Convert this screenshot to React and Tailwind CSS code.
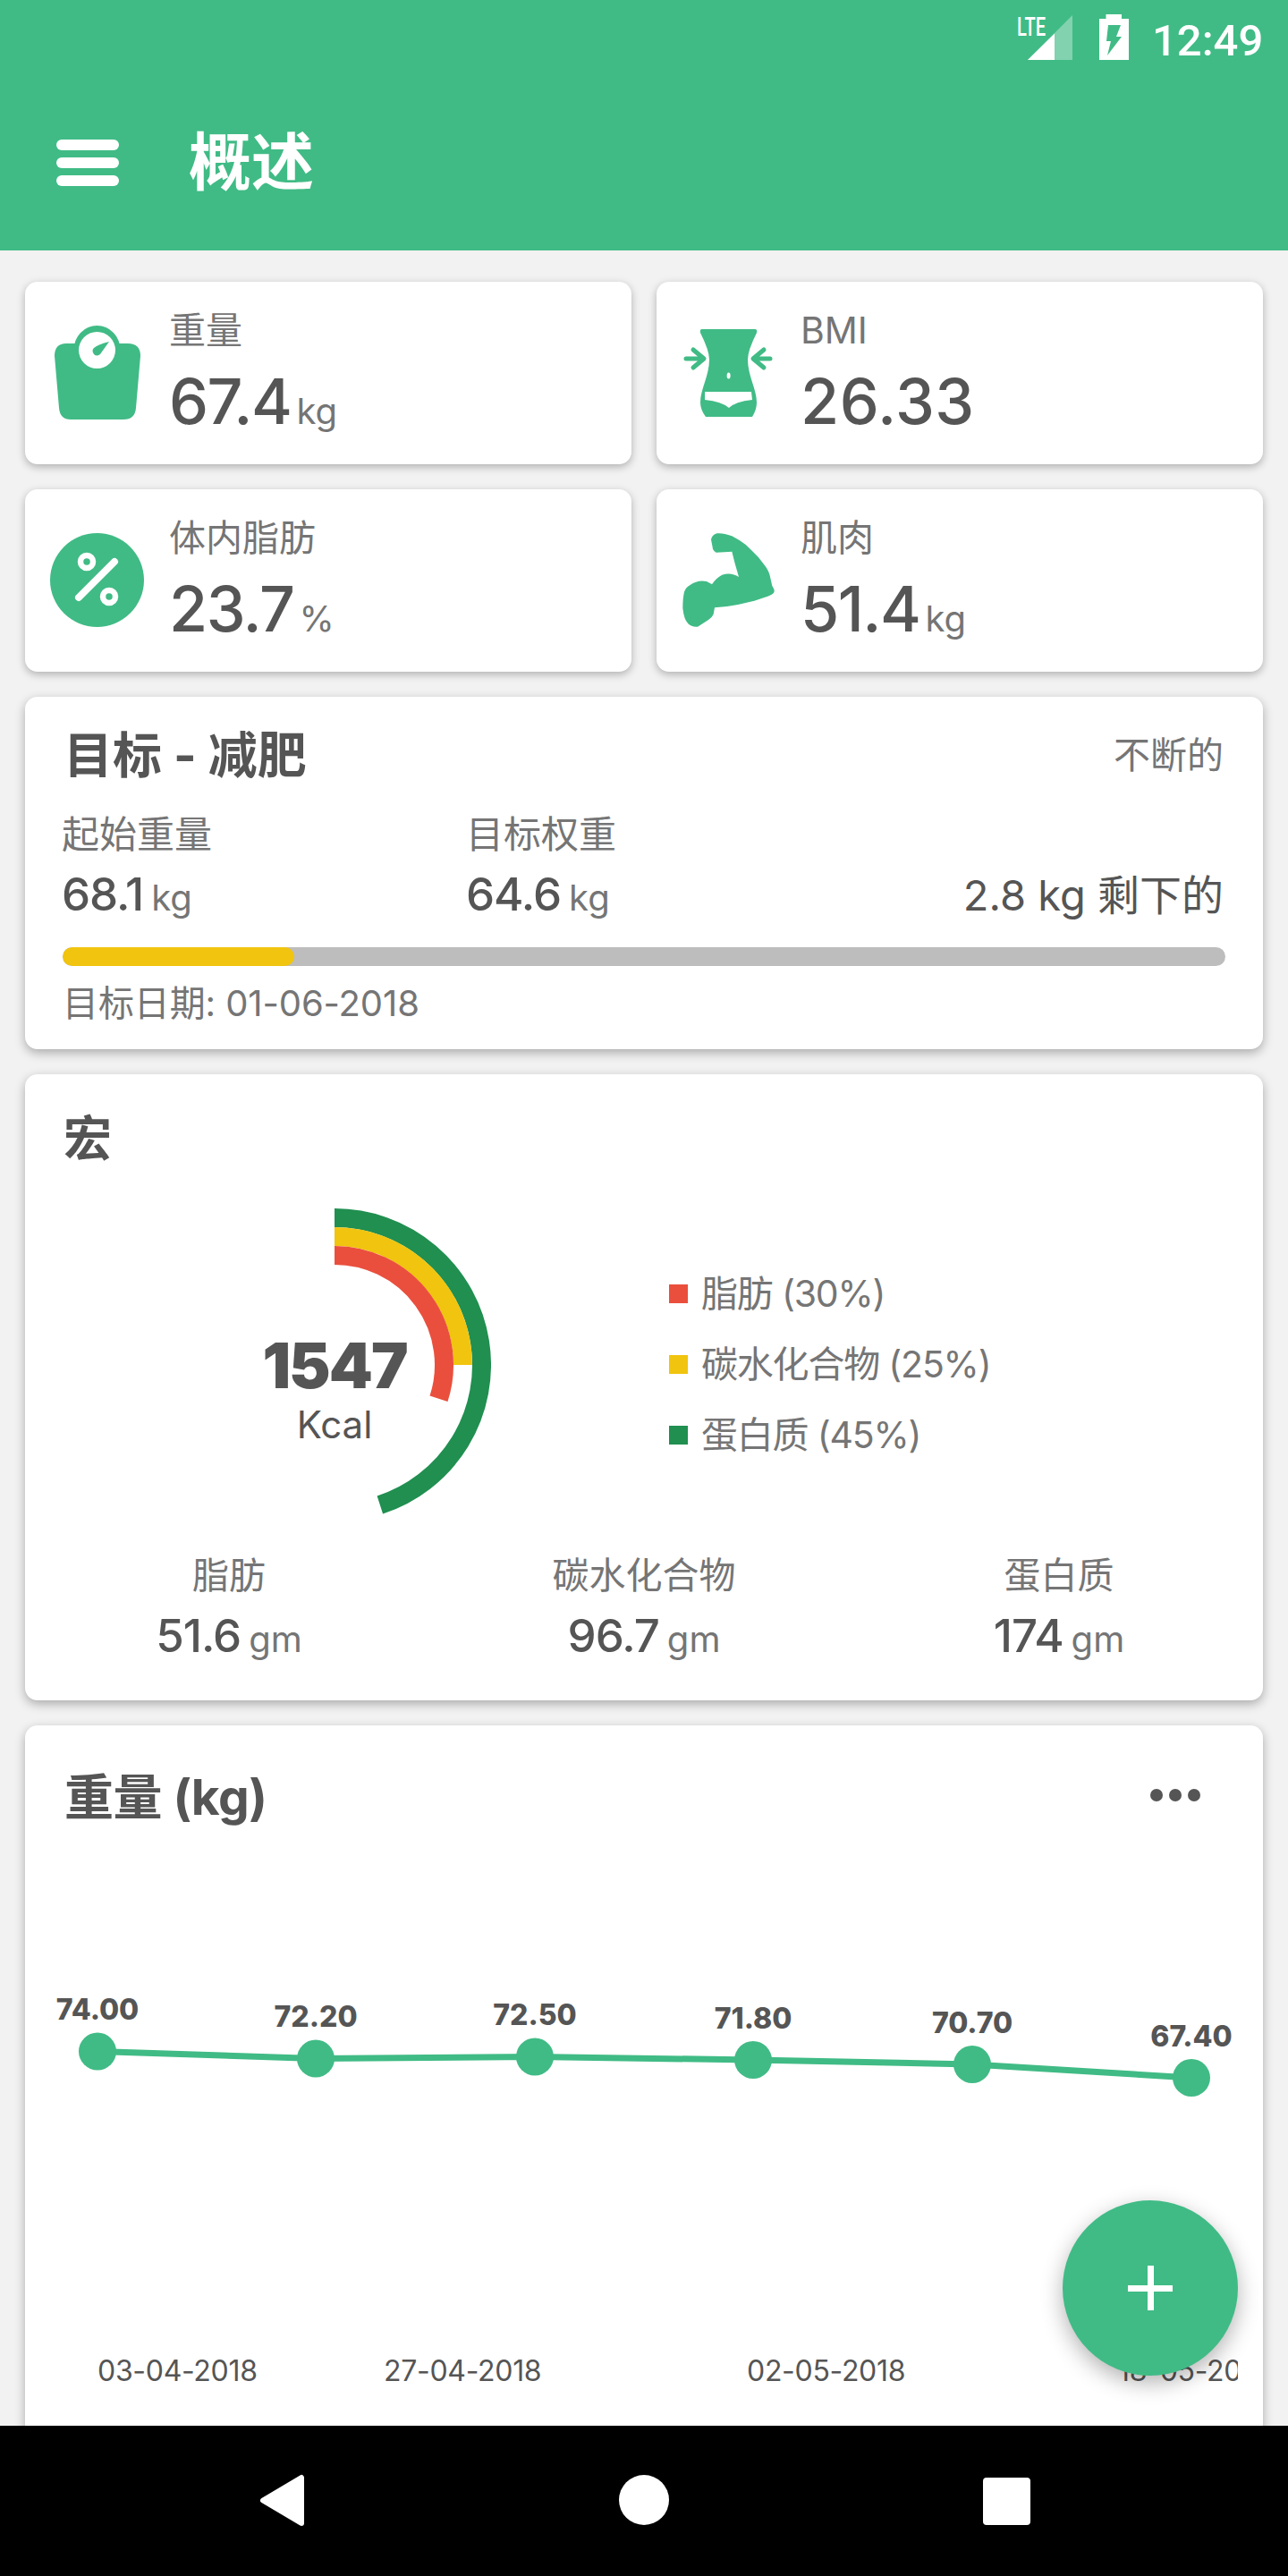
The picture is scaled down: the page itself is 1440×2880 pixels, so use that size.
import React from 'react';

const GREEN = '#40bb85';

// polar arc helper for the macro rings, angle is clockwise from 12 o'clock
const arc = (cx, cy, r, deg) => {
    const rad = (deg * Math.PI) / 180;
    const x = cx + r * Math.sin(rad);
    const y = cy - r * Math.cos(rad);
    return `M${cx} ${cy - r} A${r} ${r} 0 ${deg > 180 ? 1 : 0} 1 ${x} ${y}`;
};

const ScaleIcon = () => (
    <svg viewBox="55 362 110 110" className="w-[110px] h-[110px] shrink-0">
        <ellipse cx="108.5" cy="391" rx="26" ry="27" fill={GREEN} />
        <path d="M74 384H143Q157 384 157 398L152 456Q151 469 138 469H79Q67 469 66 456L61 398Q61 384 74 384Z" fill={GREEN} />
        <ellipse cx="108.5" cy="391.5" rx="20.5" ry="20.5" fill="#fff" />
        <path d="M122 382L112 396Q108 399 105 396Q102 392 105 389Q110 385 122 382Z" fill={GREEN} />
    </svg>
);

const WaistIcon = () => (
    <svg viewBox="761 362 110 110" className="w-[110px] h-[110px] shrink-0">
        <path d="M785 368H844Q847 368 846 372Q836 392 836 402C836 420 846 435 846 450Q846 458 841 466H789Q783 458 783 450C783 435 793 420 793 402Q793 392 783 372Q782 368 785 368Z" fill={GREEN} />
        <path d="M788 438H840L841 447Q822 449 815 456Q807 449 788 447Z" fill="#fff" />
        <ellipse cx="814.6" cy="420" rx="2" ry="3.5" fill="#fff" />
        <g fill="none" stroke={GREEN} strokeWidth="5" strokeLinecap="round" strokeLinejoin="round">
            <path d="M767 401H785M775 391L787 401L775 411" />
            <path d="M861 401H844M854 391L842 401L854 411" />
        </g>
    </svg>
);

const PercentIcon = () => (
    <svg viewBox="55 594 110 110" className="w-[110px] h-[110px] shrink-0">
        <circle cx="108.5" cy="648.5" r="52.5" fill={GREEN} />
        <path d="M88 668L128 628" stroke="#fff" strokeWidth="8" strokeLinecap="round" />
        <circle cx="97" cy="628" r="7" fill="none" stroke="#fff" strokeWidth="6.5" />
        <circle cx="122" cy="667" r="7" fill="none" stroke="#fff" strokeWidth="6.5" />
    </svg>
);

const ArmIcon = () => (
    <svg viewBox="761 594 110 110" className="w-[110px] h-[110px] shrink-0">
        <path
            transform="translate(730 540) scale(0.3333)"
            d="M195 190Q198 174 215 169Q232 166 265 178L290 192Q312 205 330 225Q355 248 370 270Q388 292 392 310L400 345Q410 360 406 367Q400 376 385 380L340 395L285 408Q245 416 207 418L203 440Q198 452 185 460L150 482Q130 484 118 472Q104 458 100 420Q100 385 105 365Q110 350 125 342Q150 324 180 330L198 340Q212 318 232 308Q262 298 288 315L275 270L265 230Q240 232 212 233Q200 225 200 215Z"
            fill={GREEN}
        />
    </svg>
);

const StatCard = ({ icon, label, value, unit, wide }) => (
    <div className="h-[204px] bg-white rounded-[14px] shadow-[0_3px_10px_rgba(0,0,0,0.28)] flex items-start pl-[27px] pt-[47px] gap-[24px]">
        {icon}
        <div className="flex flex-col -mt-[17px]">
            <span className="text-[41px] leading-[48px] text-[#757575]">{label}</span>
            <div className="mt-[21px] flex items-baseline leading-[70px]">
                <span className={`text-[70px] font-medium text-[#555555] ${wide ? 'tracking-[0.5px]' : 'tracking-[-1.5px]'}`}>{value}</span>
                {unit && <span className="text-[40px] ml-[6px] text-[#757575]">{unit}</span>}
            </div>
        </div>
    </div>
);

const SmallValue = ({ value, unit, className = '' }) => (
    <div className={`flex items-baseline leading-[56px] ${className}`}>
        <span className="text-[51px] font-medium tracking-[-1px] text-[#555555]">{value}</span>
        <span className="text-[40px] ml-[9px] text-[#757575]">{unit}</span>
    </div>
);

const GoalCard = () => (
    <div className="h-[394px] shrink-0 bg-white rounded-[14px] shadow-[0_4px_12px_rgba(0,0,0,0.3)] px-[42px] pt-[30px] flex flex-col">
        <div className="flex justify-between items-center">
            <span className="text-[55px] leading-[70px] font-bold text-[#555555] ml-[1px]">目标 - 减肥</span>
            <span className="text-[41px] leading-[48px] text-[#757575] mr-[2px]">不断的</span>
        </div>
        <div className="flex items-end mt-[30px]">
            <div className="w-[452px] ml-[-1px]">
                <div className="text-[42px] leading-[48px] text-[#757575]">起始重量</div>
                <SmallValue value="68.1" unit="kg" className="mt-[15px]" />
            </div>
            <div className="flex-1">
                <div className="text-[42px] leading-[48px] text-[#757575]">目标权重</div>
                <SmallValue value="64.6" unit="kg" className="mt-[15px]" />
            </div>
            <div className="text-[47px] leading-[56px] text-[#555555] mr-[2px] mb-[3px]">2.8 kg 剩下的</div>
        </div>
        <div className="h-[21px] rounded-full bg-[#bdbdbd] mt-[27px] overflow-hidden">
            <div className="h-full w-[259px] rounded-full bg-[#f1c40f]" />
        </div>
        <div className="text-[40px] leading-[48px] text-[#757575] mt-[18px] tracking-[-0.1px]">目标日期: 01-06-2018</div>
    </div>
);

const LegendItem = ({ color, label }) => (
    <div className="flex items-center h-[79px] gap-[15px]">
        <span className={`w-[21px] h-[21px] ${color}`} />
        <span className="text-[41px] text-[#757575] tracking-[-1.2px]">{label}</span>
    </div>
);

const MacroStat = ({ label, value }) => (
    <div className="flex flex-col items-center">
        <span className="text-[41px] leading-[48px] text-[#757575]">{label}</span>
        <SmallValue value={value} unit="gm" className="mt-[16px]" />
    </div>
);

const MacroCard = () => (
    <div className="h-[700px] shrink-0 bg-white rounded-[14px] shadow-[0_4px_12px_rgba(0,0,0,0.3)] pt-[38px] flex flex-col">
        <div className="text-[54px] leading-[70px] font-bold text-[#555555] pl-[43px]">宏</div>
        <div className="flex items-start mt-[42px]">
            <div className="relative w-[350px] h-[350px] ml-[171px] shrink-0">
                <svg viewBox="0 0 350 350" className="w-full h-full" fill="none" strokeWidth="21">
                    <path d={arc(175, 175, 164.5, 162)} stroke="#208f50" />
                    <path d={arc(175, 175, 143.5, 90)} stroke="#f1c40f" />
                    <path d={arc(175, 175, 122.5, 108)} stroke="#ea4f3d" />
                </svg>
                <div className="absolute left-[35px] top-[141px] w-[280px] flex flex-col items-center">
                    <span className="text-[70px] leading-[70px] font-black tracking-[-2px] text-[#555555]">1547</span>
                    <span className="text-[42px] leading-[50px] mt-[6px] text-[#555555]">Kcal</span>
                </div>
            </div>
            <div className="ml-[199px] mt-[56px]">
                <LegendItem color="bg-[#ea4f3d]" label="脂肪 (30%)" />
                <LegendItem color="bg-[#f1c40f]" label="碳水化合物 (25%)" />
                <LegendItem color="bg-[#208f50]" label="蛋白质 (45%)" />
            </div>
        </div>
        <div className="grid grid-cols-3 -mx-[4px] mt-[36px]">
            <MacroStat label="脂肪" value="51.6" />
            <MacroStat label="碳水化合物" value="96.7" />
            <MacroStat label="蛋白质" value="174" />
        </div>
    </div>
);

const points = [
    { x: 109, y: 2293.5, v: '74.00' },
    { x: 353, y: 2301.5, v: '72.20' },
    { x: 598, y: 2299.5, v: '72.50' },
    { x: 842, y: 2303, v: '71.80' },
    { x: 1087, y: 2308, v: '70.70' },
    { x: 1332, y: 2323, v: '67.40' },
];

const dates = [
    { x: 109, t: '03-04-2018' },
    { x: 429, t: '27-04-2018' },
    { x: 835, t: '02-05-2018' },
    { x: 1250, t: '18-05-2018' },
];

const WeightCard = () => (
    <div className="h-[800px] shrink-0 bg-white rounded-[14px] shadow-[0_4px_12px_rgba(0,0,0,0.3)] flex flex-col">
        <div className="flex justify-between items-center pl-[44px] pr-[70px] pt-[40px]">
            <span className="text-[55px] leading-[80px] font-bold text-[#555555] tracking-[-0.5px]">重量 (kg)</span>
            <div className="flex gap-[7px] -mt-[4px]">
                <span className="w-[14px] h-[14px] rounded-full bg-[#555555]" />
                <span className="w-[14px] h-[14px] rounded-full bg-[#555555]" />
                <span className="w-[14px] h-[14px] rounded-full bg-[#555555]" />
            </div>
        </div>
        <svg viewBox="28 2200 1384 480" className="w-[1384px] h-[480px] mt-[151px]">
            <defs>
                <clipPath id="dates-clip">
                    <rect x="28" y="2600" width="1356" height="80" />
                </clipPath>
            </defs>
            <polyline points={points.map((p) => `${p.x},${p.y}`).join(' ')} fill="none" stroke={GREEN} strokeWidth="7" />
            {points.map((p) => (
                <g key={p.v}>
                    <circle cx={p.x} cy={p.y} r="21" fill={GREEN} />
                    <text x={p.x} y={p.y - 35.5} textAnchor="middle" fontSize="32" fontWeight="800" fill="#555555">{p.v}</text>
                </g>
            ))}
            <g clipPath="url(#dates-clip)">
                {dates.map((d) => (
                    <text key={d.t} x={d.x} y="2662" fontSize="32" letterSpacing="-0.3" fill="#555555">{d.t}</text>
                ))}
            </g>
        </svg>
    </div>
);

const StatusBar = () => (
    <div className="h-[80px] flex justify-end">
        <svg viewBox="1130 0 310 80" className="w-[310px] h-[80px]">
            <text x="1137" y="40" fontFamily="Roboto" fontSize="30" fontWeight="500" fill="#fff" textLength="32" lengthAdjust="spacingAndGlyphs">LTE</text>
            <path d="M1199 17V67H1149Z" fill="#fff" fillOpacity="0.35" />
            <path d="M1179 37.5V67H1149Z" fill="#fff" />
            <path d="M1236.5 16H1254V21H1262V67H1229V21H1236.5Z" fill="#fff" />
            <path d="M1239 28H1253L1248 41H1254L1238 62L1242 46H1237Z" fill={GREEN} />
            <text x="1288" y="62" fontFamily="Roboto" fontSize="49" fontWeight="500" fill="#fff">12:49</text>
        </svg>
    </div>
);

const Header = () => (
    <div className="h-[280px] shrink-0 bg-[#40bb85] flex flex-col">
        <StatusBar />
        <div className="flex items-center pl-[63px] h-[180px] mt-[12px]">
            <div className="flex flex-col gap-[8px] w-[70px]">
                <span className="h-[12px] rounded-full bg-white" />
                <span className="h-[12px] rounded-full bg-white" />
                <span className="h-[12px] rounded-full bg-white" />
            </div>
            <span className="ml-[78px] text-[70px] leading-[80px] font-bold text-white">概述</span>
        </div>
    </div>
);

const NavBar = () => (
    <div className="h-[168px] shrink-0 bg-black flex items-center relative">
        <svg viewBox="285 2760 62 70" className="absolute left-[285px] top-[48px] w-[62px] h-[70px]">
            <path d="M337 2770V2821L294 2795.5Z" fill="#fff" stroke="#fff" strokeWidth="6" strokeLinejoin="round" />
        </svg>
        <span className="absolute left-[692px] top-[55px] w-[56px] h-[56px] rounded-full bg-white" />
        <span className="absolute left-[1099px] top-[58px] w-[53px] h-[53px] rounded-[4px] bg-white" />
    </div>
);

const App = () => (
    <div className="relative w-[1440px] h-[2880px] overflow-hidden flex flex-col bg-[#f2f2f2] font-['Inter','Noto_Sans_CJK_SC',sans-serif]">
        <Header />
        <main className="flex-1 overflow-hidden px-[28px] pt-[35px] flex flex-col gap-[28px]">
            <div className="grid grid-cols-2 gap-[28px] shrink-0">
                <StatCard icon={<ScaleIcon />} label="重量" value="67.4" unit="kg" />
                <StatCard icon={<WaistIcon />} label="BMI" value="26.33" wide />
                <StatCard icon={<PercentIcon />} label="体内脂肪" value="23.7" unit="%" />
                <StatCard icon={<ArmIcon />} label="肌肉" value="51.4" unit="kg" />
            </div>
            <GoalCard />
            <MacroCard />
            <WeightCard />
        </main>
        <NavBar />
        <button className="absolute left-[1188px] top-[2460px] w-[196px] h-[196px] rounded-full bg-[#40bb85] shadow-[0_8px_24px_rgba(0,0,0,0.3)] flex items-center justify-center">
            <span className="relative w-[50px] h-[50px]">
                <span className="absolute left-0 top-[21.5px] w-[50px] h-[7px] bg-white" />
                <span className="absolute top-0 left-[21.5px] w-[7px] h-[50px] bg-white" />
            </span>
        </button>
    </div>
);

export default App;
